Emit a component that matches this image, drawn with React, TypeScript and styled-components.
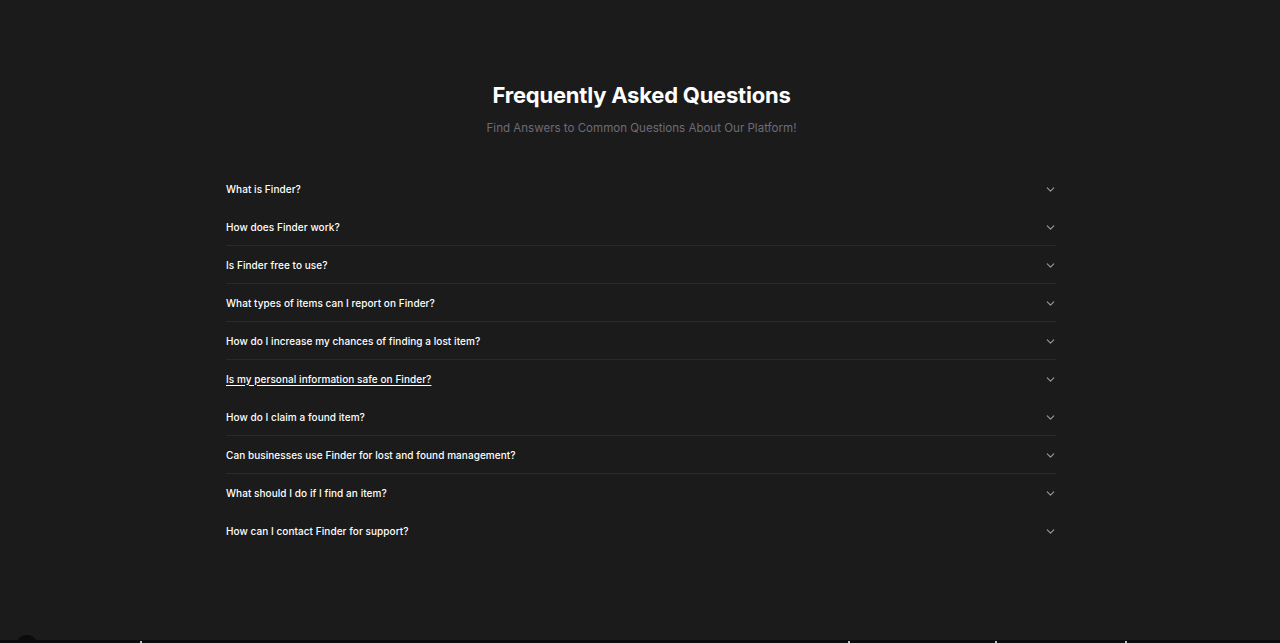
import React from "react";
import styled, { createGlobalStyle } from "styled-components";
import { ChevronDown } from "lucide-react";

const Global = createGlobalStyle`
  html, body { margin: 0; padding: 0; background: #1b1b1b; }
  body { font-family: Inter, "Noto Sans", sans-serif; -webkit-font-smoothing: antialiased; }
  * { box-sizing: border-box; }
`;

const Page = styled.div`
  background: #1b1b1b;
  height: 643px;
  overflow: hidden;
  display: flex;
  flex-direction: column;
`;

const Section = styled.section`
  height: 640px;
  flex-shrink: 0;
  padding-top: 81px;
  display: flex;
  flex-direction: column;
  align-items: center;
`;

const Title = styled.h2`
  margin: 0 0 0 3px;
  font-size: 22px;
  line-height: 28px;
  font-weight: 700;
  color: #ffffff;
  letter-spacing: -0.22px;
`;

const Subtitle = styled.p`
  margin: 11px 0 0 3px;
  font-size: 11.55px;
  line-height: 16px;
  color: #6c6c78;
`;

const List = styled.div`
  width: 830px;
  margin: 34px 0 0 2px;
  display: flex;
  flex-direction: column;
`;

const Item = styled.div<{ $divider: boolean }>`
  height: 38px;
  display: flex;
  align-items: center;
  justify-content: space-between;
  border-bottom: 1px solid ${(p) => (p.$divider ? "#2a2a2a" : "transparent")};
`;

const Question = styled.span<{ $active?: boolean }>`
  font-size: 10px;
  font-weight: 500;
  color: #ffffff;
  letter-spacing: 0.06px;
  text-decoration: ${(p) => (p.$active ? "underline" : "none")};
  text-underline-offset: 2px;
`;

const Chevron = styled(ChevronDown)`
  color: #9a9a9a;
  margin: 2px -1px 0 0;
`;

const Footer = styled.footer`
  position: relative;
  flex: 1;
  background: #0b0b0b;
`;

const Avatar = styled.div`
  position: absolute;
  left: 16px;
  top: -5px;
  width: 22px;
  height: 22px;
  border-radius: 50%;
  background: #0b0b0b;
`;

const Dot = styled.div<{ $x: number }>`
  position: absolute;
  left: ${(p) => p.$x}px;
  top: 1px;
  width: 2px;
  height: 2px;
  background: #bdbdbd;
`;

const questions = [
  "What is Finder?",
  "How does Finder work?",
  "Is Finder free to use?",
  "What types of items can I report on Finder?",
  "How do I increase my chances of finding a lost item?",
  "Is my personal information safe on Finder?",
  "How do I claim a found item?",
  "Can businesses use Finder for lost and found management?",
  "What should I do if I find an item?",
  "How can I contact Finder for support?",
];

const hidden = new Set([0, 5, 8, 9]);

export default function App() {
  return (
    <Page>
      <Global />
      <Section>
        <Title>Frequently Asked Questions</Title>
        <Subtitle>Find Answers to Common Questions About Our Platform!</Subtitle>
        <List>
          {questions.map((q, i) => (
            <Item key={q} $divider={!hidden.has(i)}>
              <Question $active={i === 5}>{q}</Question>
              <Chevron size={13} strokeWidth={2} />
            </Item>
          ))}
        </List>
      </Section>
      <Footer>
        <Avatar />
        <Dot $x={140} />
        <Dot $x={848} />
        <Dot $x={995} />
        <Dot $x={1125} />
      </Footer>
    </Page>
  );
}
